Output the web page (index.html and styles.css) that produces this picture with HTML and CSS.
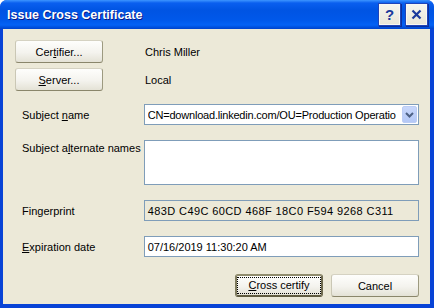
FILE: index.html
```html
<!DOCTYPE html>
<html lang="en">
  <head>
    <meta charset="UTF-8" />
    <meta name="viewport" content="width=device-width, initial-scale=1.0" />
    <title>Issue Cross Certificate</title>

    <link rel="stylesheet" href="styles.css">
  </head>

  <body>
    <div class="window">
      <div class="titlebar">
        <div class="title">Issue Cross Certificate</div>
        <div class="win-button help">?</div>
        <div class="win-button close">
          <svg width="11" height="11" viewBox="0 0 11 11">
            <path d="M1.5 1.5 L9.5 9.5 M9.5 1.5 L1.5 9.5" stroke="#1b3a9c" stroke-width="2.2" fill="none" />
          </svg>
        </div>
      </div>
      <div class="client">
        <div class="pick-row">
          <div class="button"><span>Cer<u>t</u>ifier...</span></div>
          <div class="value">Chris Miller</div>
        </div>
        <div class="pick-row server-row">
          <div class="button"><span><u>S</u>erver...</span></div>
          <div class="value">Local</div>
        </div>

        <div class="field-row subject-row">
          <div class="label">Subject <u>n</u>ame</div>
          <div class="combo">
            <div class="combo-text">CN=download.linkedin.com/OU=Production Operatio</div>
            <div class="combo-arrow">
              <svg width="9" height="6" viewBox="0 0 9 6">
                <path d="M1 1 L4.5 4.5 L8 1" stroke="#4d6185" stroke-width="2" fill="none" />
              </svg>
            </div>
          </div>
        </div>
        <div class="field-row alt-row">
          <div class="label">Subject a<u>l</u>ternate names</div>
          <div class="textbox multi"></div>
        </div>
        <div class="field-row print-row">
          <div class="label">Fingerprint</div>
          <div class="textbox readonly fingerprint">483D C49C 60CD 468F 18C0 F594 9268 C311</div>
        </div>
        <div class="field-row date-row">
          <div class="label"><u>E</u>xpiration date</div>
          <div class="textbox">07/16/2019 11:30:20 AM</div>
        </div>

        <div class="actions">
          <div class="button default"><span class="focus"><u>C</u>ross certify</span></div>
          <div class="button"><span>Cancel</span></div>
        </div>
      </div>
    </div>
  </body>
</html>
```

FILE: styles.css
```css
body {
  margin: 0;
  background: white;
  font-family: "Liberation Sans", Arial, sans-serif;
  font-size: 11px;
  color: black;
}
.window {
  width: 434px;
  height: 308px;
  box-sizing: border-box;
  display: flex;
  flex-direction: column;
  background-color: #0843d6;
  border-radius: 7px 7px 0 0;
  overflow: hidden;
  user-select: none;
}
.titlebar {
  height: 29px;
  flex-shrink: 0;
  display: flex;
  align-items: center;
  padding: 0 7px 0 7px;
  background: linear-gradient(
    to bottom,
    #3d95ff 0,
    #0a5fef 3px,
    #0054e3 10px,
    #0058ea 20px,
    #0462f5 25px,
    #0052e0 27px,
    #0043cc 29px
  );
}
.title {
  flex-grow: 1;
  color: white;
  font-size: 12.5px;
  font-weight: bold;
  text-shadow: 1px 1px #0a1883;
  padding-top: 1px;
}
.win-button {
  width: 19px;
  height: 19px;
  margin-left: 3px;
  display: flex;
  align-items: center;
  justify-content: center;
  background: linear-gradient(#f6f5ee, #e9e6d8);
  border: 1px solid #f9f8f1;
  box-shadow: 0 0 0 1px #1f44b8, 1px 1px 0 1px #0b2f9c;
  color: #1b3a9c;
  font-size: 15px;
  font-weight: bold;
}
.help {
  margin-right: 3px;
}
.client {
  flex-grow: 1;
  margin: 0 4px 4px 3px;
  padding: 11px 11px 0 12px;
  background-color: #ece9d8;
  display: flex;
  flex-direction: column;
}

.button {
  width: 88px;
  height: 23px;
  box-sizing: border-box;
  display: flex;
  align-items: center;
  justify-content: center;
  border: 1px solid;
  border-color: #d5d2c2 #9d9a80 #8a866b #cac7b5;
  border-radius: 3px;
  background: linear-gradient(#fefefc, #f4f3ee 55%, #e4e2d6 100%);
}
.button u {
  text-decoration-thickness: 1px;
}
.default {
  border: 2px solid;
  border-color: #8f8b6c #6e6a4e #5f5b40 #7f7b5e;
}
.focus {
  padding: 2px 4px;
  outline: 1px dotted black;
  outline-offset: 0;
  width: 74px;
  height: 11px;
  line-height: 11px;
  text-align: center;
}

.pick-row {
  display: flex;
  align-items: center;
}
.server-row {
  margin-top: 5px;
}
.value {
  margin-left: 42px;
}

.field-row {
  display: flex;
  align-items: flex-start;
  padding-left: 7px;
}
.label {
  width: 122px;
  padding-top: 5px;
}
.subject-row {
  margin-top: 13px;
}
.alt-row {
  margin-top: 15px;
}
.alt-row .label {
  padding-top: 2px;
}
.print-row {
  margin-top: 15px;
}
.date-row {
  margin-top: 15px;
}

.textbox,
.combo {
  width: 276px;
  height: 21px;
  box-sizing: border-box;
  border: 1px solid #7f9db9;
  background-color: white;
  padding: 0 3px;
  display: flex;
  align-items: center;
}
.multi {
  height: 45px;
}
.readonly {
  background-color: #ece9d8;
}
.fingerprint {
  letter-spacing: 0.4px;
}
.combo {
  padding: 1px 1px 1px 3px;
}
.combo-text {
  flex-grow: 1;
  white-space: nowrap;
  overflow: hidden;
  letter-spacing: -0.2px;
}
.combo-arrow {
  width: 15px;
  height: 17px;
  flex-shrink: 0;
  margin-left: 2px;
  display: flex;
  align-items: center;
  justify-content: center;
  border-radius: 2px;
  background: linear-gradient(#c8d7fb, #b4c8f6);
  border: 1px solid #bccdf5;
  box-sizing: border-box;
}

.actions {
  display: flex;
  justify-content: flex-end;
  gap: 8px;
  margin-top: 17px;
}
```
